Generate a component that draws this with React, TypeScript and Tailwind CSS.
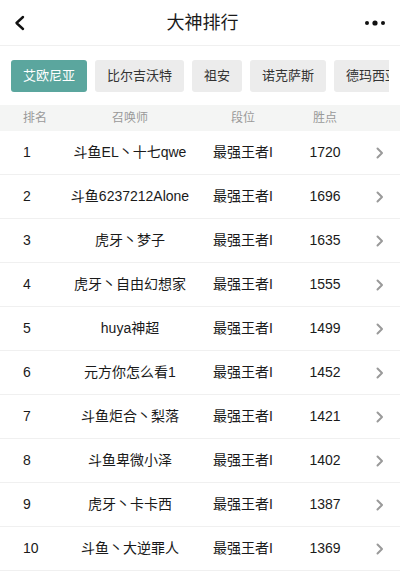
import React, { useState } from 'react';

const FONT = '"Liberation Sans", "Noto Sans CJK SC", sans-serif';

const regions = ['艾欧尼亚', '比尔吉沃特', '祖安', '诺克萨斯', '德玛西亚'];

const players = [
    { rank: 1, name: '斗鱼EL丶十七qwe', tier: '最强王者I', points: 1720 },
    { rank: 2, name: '斗鱼6237212Alone', tier: '最强王者I', points: 1696 },
    { rank: 3, name: '虎牙丶梦子', tier: '最强王者I', points: 1635 },
    { rank: 4, name: '虎牙丶自由幻想家', tier: '最强王者I', points: 1555 },
    { rank: 5, name: 'huya神超', tier: '最强王者I', points: 1499 },
    { rank: 6, name: '元方你怎么看1', tier: '最强王者I', points: 1452 },
    { rank: 7, name: '斗鱼炬合丶梨落', tier: '最强王者I', points: 1421 },
    { rank: 8, name: '斗鱼卑微小泽', tier: '最强王者I', points: 1402 },
    { rank: 9, name: '虎牙丶卡卡西', tier: '最强王者I', points: 1387 },
    { rank: 10, name: '斗鱼丶大逆罪人', tier: '最强王者I', points: 1369 },
];

const App = () => {
    const [selected, setSelected] = useState('艾欧尼亚');

    return (
        <div className="w-[400px] h-[572px] overflow-hidden bg-white text-[#1a1a1a]" style={{ fontFamily: FONT }}>
            {/* Nav bar */}
            <div className="h-[46px] flex items-center justify-between px-[12px] border-b border-[#f0f0f0]">
                <svg width="14" height="16" viewBox="0 0 14 16" className="ml-[1px]">
                    <path d="M10 2 L3.5 8 L10 14" fill="none" stroke="#111" strokeWidth="2.4" strokeLinecap="round" strokeLinejoin="round" />
                </svg>
                <div className="text-[18px] leading-none ml-[14px]">大神排行</div>
                <svg width="22" height="6" viewBox="0 0 22 6" className="mr-[2px]">
                    <circle cx="3" cy="3" r="2" fill="#111" />
                    <circle cx="11" cy="3" r="2.6" fill="#111" />
                    <circle cx="19" cy="3" r="2" fill="#111" />
                </svg>
            </div>

            {/* Region tabs */}
            <div className="px-[11px] pt-[14px] pb-[13px]">
                <div className="flex gap-[8px] overflow-hidden">
                    {regions.map((r) => (
                        <button
                            key={r}
                            onClick={() => setSelected(r)}
                            className={`shrink-0 h-[32px] px-[12px] rounded-[3px] text-[13px] ${selected === r ? 'bg-[#5ba69e] text-white' : 'bg-[#ececec] text-[#333]'}`}
                        >
                            {r}
                        </button>
                    ))}
                </div>
            </div>

            {/* Table header */}
            <div className="h-[26px] bg-[#f4f5f4] flex items-center text-[12px] text-[#999]">
                <div className="w-[64px] pl-[23px]">排名</div>
                <div className="w-[132px] text-center">召唤师</div>
                <div className="w-[94px] text-center">段位</div>
                <div className="w-[70px] text-center">胜点</div>
            </div>

            {/* Rows */}
            {players.map((p) => (
                <div key={p.rank} className="h-[44px] flex items-center border-b border-[#f0f0f0] text-[14px]">
                    <div className="w-[64px] pl-[23px]">{p.rank}</div>
                    <div className="w-[132px] text-center whitespace-nowrap">{p.name}</div>
                    <div className="w-[94px] text-center">{p.tier}</div>
                    <div className="w-[70px] text-center">{p.points}</div>
                    <div className="flex-1 flex justify-center">
                        <svg width="8" height="12" viewBox="0 0 8 12">
                            <path d="M1.5 1.5 L6 6 L1.5 10.5" fill="none" stroke="#9a9a9a" strokeWidth="2" strokeLinecap="round" strokeLinejoin="round" />
                        </svg>
                    </div>
                </div>
            ))}
        </div>
    );
};

export default App;
